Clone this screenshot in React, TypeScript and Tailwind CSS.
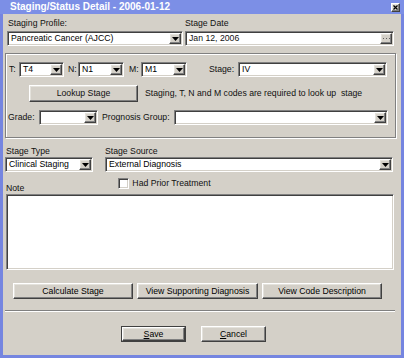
import React from "react";

const SUNKEN =
  "border border-t-[#808080] border-l-[#808080] border-b-white border-r-white shadow-[inset_1px_1px_0_#404040,inset_-1px_-1px_0_#d4d0c8]";
const RAISED =
  "border border-t-white border-l-white border-b-[#404040] border-r-[#404040] shadow-[inset_-1px_-1px_0_#808080,inset_1px_1px_0_#e4e2dc] bg-[#d4d0c8]";

function Arrow() {
  return (
    <div className={`${RAISED} w-[12px] h-full flex items-center justify-center shrink-0`}>
      <svg width="7" height="4" viewBox="0 0 7 4">
        <path d="M0 0 H7 L3.5 4 Z" fill="#000" />
      </svg>
    </div>
  );
}

function Combo({ w, value }: { w: string; value?: string }) {
  return (
    <div className={`${SUNKEN} ${w} h-[15px] bg-white flex items-stretch p-[1px] shrink-0`}>
      <div className="flex-1 flex items-center pl-[2px] text-black overflow-hidden whitespace-nowrap">
        {value}
      </div>
      <Arrow />
    </div>
  );
}

function Btn({ w, children, def }: { w: string; children: React.ReactNode; def?: boolean }) {
  const inner = (
    <div className={`${RAISED} ${def ? "w-full h-full" : w + " h-[16px]"} flex items-center justify-center text-black`}>
      {children}
    </div>
  );
  if (def) {
    return <div className={`${w} h-[16px] border border-[#404040] flex`}>{inner}</div>;
  }
  return inner;
}

export default function App() {
  return (
    <div
      className="w-[405px] h-[361px] bg-white overflow-hidden text-[8.7px] leading-[11px] text-[#111]"
      style={{ fontFamily: '"Liberation Sans", Arial, sans-serif' }}
    >
      <div className="w-[404px] h-[358px] bg-[#d4d0c8] border-x-[3px] border-b-[3px] border-[#7585e0] flex flex-col">
        {/* title bar */}
        <div className="h-[14px] -mx-[3px] bg-[#7c8fe6] flex items-center pl-[10px] pr-[4px] shrink-0">
          <div className="flex-1 text-white font-bold text-[10px] leading-[12px] whitespace-nowrap">
            Staging/Status Detail - 2006-01-12
          </div>
          <div className={`${RAISED} w-[9px] h-[9px] flex items-center justify-center`}>
            <svg width="5" height="5" viewBox="0 0 5 5">
              <path d="M0.5 0.5 L4.5 4.5 M4.5 0.5 L0.5 4.5" stroke="#000" strokeWidth="1.2" />
            </svg>
          </div>
        </div>

        {/* Profile / date */}
        <div className="flex mt-[4px]">
          <div className="ml-[4px] w-[176px] flex flex-col">
            <div className="h-[11px] pl-[1px]">Staging Profile:</div>
            <div className="mt-[2px]">
              <Combo w="w-[176px]" value="Pancreatic Cancer (AJCC)" />
            </div>
          </div>
          <div className="ml-[2px] w-[209px] flex flex-col">
            <div className="h-[11px]">Stage Date</div>
            <div className={`${SUNKEN} mt-[2px] w-[209px] h-[15px] bg-white flex items-stretch p-[1px]`}>
              <div className="flex-1 flex items-center pl-[2px]">Jan 12, 2006</div>
              <div className={`${RAISED} w-[12px] h-full flex items-center justify-center`}>
                <svg width="7" height="2" viewBox="0 0 7 2">
                  <rect x="0" y="0" width="1" height="1" fill="#606060" />
                  <rect x="3" y="0" width="1" height="1" fill="#606060" />
                  <rect x="6" y="0" width="1" height="1" fill="#606060" />
                </svg>
              </div>
            </div>
          </div>
        </div>

        {/* panel */}
        <div className="mt-[7px] ml-[2px] w-[391px] h-[85px] border border-[#808080] shadow-[inset_1px_1px_0_#ffffff,1px_1px_0_#ffffff] flex flex-col pt-[8px]">
          <div className="flex items-center h-[15px]">
            <div className="ml-[3px] w-[10px]">T:</div>
            <Combo w="w-[45px]" value="T4" />
            <div className="ml-[4px] w-[10px]">N:</div>
            <Combo w="w-[46px]" value="N1" />
            <div className="ml-[5px] w-[12px]">M:</div>
            <Combo w="w-[46px]" value="M1" />
            <div className="ml-[22px] w-[29px]">Stage:</div>
            <Combo w="w-[149px]" value="IV" />
          </div>
          <div className="flex items-center mt-[8px] h-[17px]">
            <div className={`${RAISED} ml-[23px] w-[109px] h-[17px] flex items-center justify-center`}>
              Lookup Stage
            </div>
            <div className="ml-[7px] whitespace-nowrap">
              Staging, T, N and M codes are required to look up&nbsp; stage
            </div>
          </div>
          <div className="flex items-center mt-[8px] h-[15px]">
            <div className="ml-[2px] w-[31px]">Grade:</div>
            <Combo w="w-[59px]" value="" />
            <div className="ml-[4px] w-[72px] whitespace-nowrap">Prognosis Group:</div>
            <Combo w="w-[214px]" value="" />
          </div>
        </div>

        {/* stage type / source */}
        <div className="flex mt-[8px]">
          <div className="ml-[2px] w-[88px] flex flex-col">
            <div className="h-[11px] pl-[1px]">Stage Type</div>
            <Combo w="w-[88px]" value="Clinical Staging" />
          </div>
          <div className="ml-[12px] w-[288px] flex flex-col">
            <div className="h-[11px]">Stage Source</div>
            <Combo w="w-[288px]" value="External Diagnosis" />
          </div>
        </div>

        {/* checkbox + note label */}
        <div className="flex h-[22px]">
          <div className="ml-[3px] self-end h-[11px]">Note</div>
          <div className="ml-[94px] mt-[6px] flex items-start">
            <div className={`${SUNKEN} w-[11px] h-[11px] bg-white`} />
            <div className="ml-[3px] leading-[11px]">Had Prior Treatment</div>
          </div>
        </div>

        {/* textarea */}
        <div className={`${SUNKEN} ml-[3px] w-[388px] h-[76px] bg-white`} />

        {/* action buttons */}
        <div className="flex mt-[13px] ml-[10px] gap-[4px]">
          <Btn w="w-[120px]">Calculate Stage</Btn>
          <Btn w="w-[121px]">View Supporting Diagnosis</Btn>
          <Btn w="w-[120px]">View Code Description</Btn>
        </div>

        {/* separator */}
        <div className="mt-[11px] ml-[2px] w-[390px] h-[2px] border-t border-t-[#808080] border-b border-b-white" />

        {/* save / cancel */}
        <div className="flex mt-[14px] ml-[118px] gap-[15px]">
          <Btn w="w-[65px]" def>
            <span>
              <span className="underline">S</span>ave
            </span>
          </Btn>
          <Btn w="w-[65px]">
            <span>
              <span className="underline">C</span>ancel
            </span>
          </Btn>
        </div>
      </div>
    </div>
  );
}
